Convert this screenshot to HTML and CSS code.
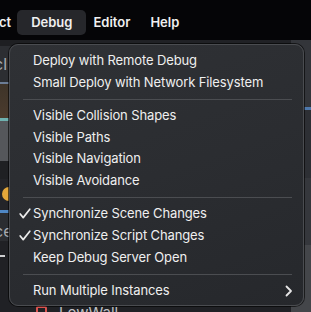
FILE: index.html
```html
<!DOCTYPE html>
<html lang="en">
<head>
    <meta charset="UTF-8">
    <title>Debug Menu</title>
    <link rel="stylesheet" href="styles.css">
</head>
<body>
    <div class="menubar">
        <span class="menubar-item cut">ct</span>
        <span class="menubar-item active">Debug</span>
        <span class="menubar-item">Editor</span>
        <span class="menubar-item">Help</span>
    </div>

    <div class="editor">
        <div class="side">
            <div class="blk dark1"></div>
            <div class="blk panel"><span class="side-text">cl</span></div>
            <div class="blk line-blue"></div>
            <div class="blk scene"></div>
            <div class="blk line-teal"></div>
            <div class="blk grey"></div>
            <div class="blk dark2"></div>
            <div class="blk dot-row"><span class="dot"></span></div>
            <div class="blk line-blue2"></div>
            <div class="blk panel2"><span class="side-text">ce</span></div>
            <div class="blk dark3"><span class="dash"></span></div>
        </div>
        <div class="mid">
            <div class="bottom-row">
                <span class="tree-icon"></span>
                <span class="bottom-text">LowWall</span>
            </div>
        </div>
        <div class="right">
            <div class="rblk r1"></div>
            <div class="rblk r2"></div>
            <div class="rblk r3"></div>
            <div class="rblk r4"></div>
        </div>
    </div>

    <div class="menu">
        <div class="item">Deploy with Remote Debug</div>
        <div class="item">Small Deploy with Network Filesystem</div>
        <div class="sep"></div>
        <div class="item">Visible Collision Shapes</div>
        <div class="item">Visible Paths</div>
        <div class="item">Visible Navigation</div>
        <div class="item">Visible Avoidance</div>
        <div class="sep"></div>
        <div class="item">
            <svg class="check" width="12" height="11" viewBox="0 0 12 11"><path d="M1.2 6 L4.2 9.6 L10.8 1.2" fill="none" stroke="#ececec" stroke-width="1.7" stroke-linecap="round" stroke-linejoin="round"/></svg>
            Synchronize Scene Changes
        </div>
        <div class="item">
            <svg class="check" width="12" height="11" viewBox="0 0 12 11"><path d="M1.2 6 L4.2 9.6 L10.8 1.2" fill="none" stroke="#ececec" stroke-width="1.7" stroke-linecap="round" stroke-linejoin="round"/></svg>
            Synchronize Script Changes
        </div>
        <div class="item">Keep Debug Server Open</div>
        <div class="sep"></div>
        <div class="item">Run Multiple Instances
            <svg class="chev" width="8" height="12" viewBox="0 0 8 12"><path d="M1.5 1.5 L6 6 L1.5 10.5" fill="none" stroke="#e6e6e6" stroke-width="1.8" stroke-linecap="round" stroke-linejoin="round"/></svg>
        </div>
    </div>
</body>
</html>
```

FILE: styles.css
```css
* {
    margin: 0;
    padding: 0;
    box-sizing: border-box;
}

body {
    width: 311px;
    height: 312px;
    overflow: hidden;
    background: #1b1c1f;
    font-family: Inter, 'Noto Sans', sans-serif;
    color: #e8e8e8;
    position: relative;
}

.menubar {
    height: 40px;
    background: #050507;
    display: flex;
    align-items: center;
    padding-top: 4px;
    font-size: 13px;
    font-weight: 600;
    color: #f0f0f0;
}

.menubar-item {
    padding: 4px 10px;
    border-radius: 5px;
    line-height: 17px;
}

.menubar-item.cut {
    margin-left: -1px;
    margin-right: 6px;
    padding: 4px 0;
}

.menubar-item.active {
    background: #26272b;
    padding: 4px 14px;
    margin-right: -3px;
}

.editor {
    height: 272px;
    display: flex;
}

.side {
    width: 30px;
    display: flex;
    flex-direction: column;
}

.blk {
    position: relative;
    overflow: hidden;
}

.dark1 { height: 6px; background: #1e1f22; }
.panel { height: 36px; background: #2c2e32; }
.line-blue { height: 2px; background: #6c7d96; }
.scene { height: 34px; background: linear-gradient(180deg, #3e3429, #4b3b2d); }
.line-teal { height: 3px; background: #6fb2b0; }
.grey { height: 40px; background: #55575b; }
.dark2 { height: 18px; background: #1f2023; }
.dot-row { height: 31px; background: #232428; }
.line-blue2 { height: 3px; background: #4f87c4; }
.panel2 { height: 28px; background: #2b2d31; }
.dark3 { flex: 1; background: #202125; }

.side-text {
    position: absolute;
    left: -6px;
    top: 8px;
    font-size: 16px;
    color: #a9abaf;
}

.dot {
    position: absolute;
    left: 2px;
    top: 8px;
    width: 14px;
    height: 14px;
    border-radius: 50%;
    background: #e3a73a;
}

.dash {
    position: absolute;
    left: 0;
    top: 14px;
    width: 5px;
    height: 2px;
    background: #cfd0d2;
}

.mid {
    flex: 1;
    background: #202125;
    display: flex;
    align-items: flex-end;
}

.bottom-row {
    height: 7px;
    display: flex;
    align-items: flex-start;
    gap: 12px;
    padding-left: 6px;
    overflow: hidden;
}

.tree-icon {
    width: 11px;
    height: 10px;
    border: 2px solid #d9534f;
    border-radius: 2px;
    margin-top: 1px;
}

.bottom-text {
    font-size: 15px;
    line-height: 15px;
    color: #bfc0c3;
}

.right {
    width: 20px;
    display: flex;
    flex-direction: column;
    background: #2c2e33;
}

.rblk { flex: 1; }
.r1 { background: #33353a; }
.r2 { background: #2d2f34; border-top: 3px solid #4f79ad; }
.r3 { background: #35373c; }
.r4 { background: #44464a; }

.menu {
    position: absolute;
    left: 9px;
    top: 44px;
    width: 295px;
    height: 262px;
    background: linear-gradient(160deg, #2f3135 0%, #2b2d31 50%, #26282c 100%);
    border: 1px solid #4a4c50;
    border-radius: 9px;
    box-shadow: 0 0 0 1px rgba(0, 0, 0, 0.6);
    padding-top: 4.75px;
    font-size: 13px;
    letter-spacing: -0.12px;
}

.item {
    position: relative;
    height: 21.75px;
    line-height: 21.75px;
    padding-left: 23px;
    color: #efefef;
}

.check {
    position: absolute;
    left: 9px;
    top: 5px;
}

.sep {
    height: 1px;
    background: #4b4d51;
    margin: 5.25px 11px 5.25px 13px;
}

.chev {
    position: absolute;
    right: 10px;
    top: 5px;
}
```
